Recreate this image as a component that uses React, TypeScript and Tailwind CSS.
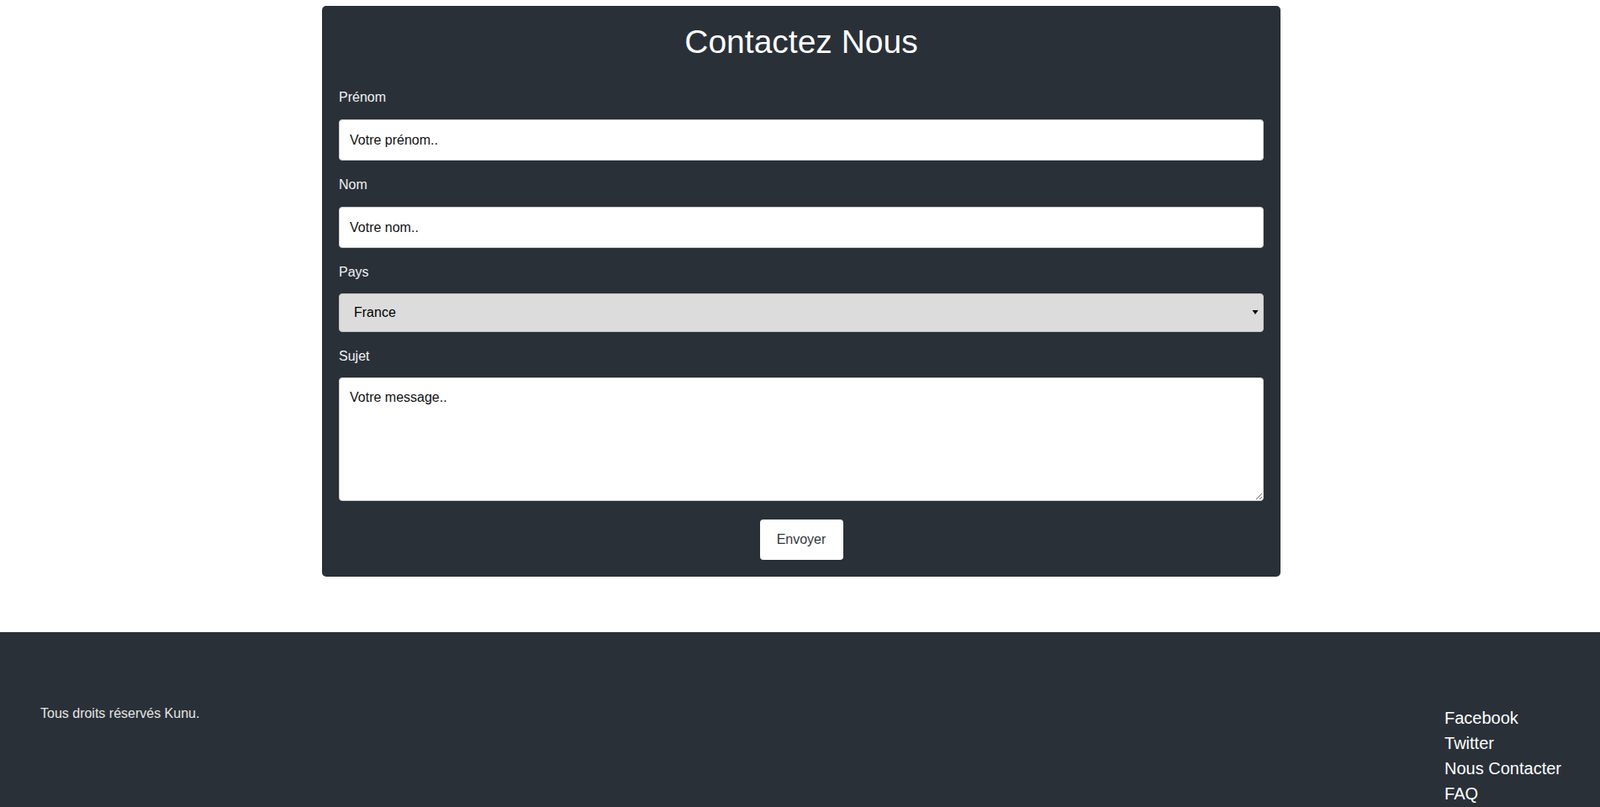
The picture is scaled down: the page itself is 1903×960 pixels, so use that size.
import React from 'react'

const fieldClass =
  'block w-full rounded-[4px] border border-[#cccccc] bg-white px-[12px] text-[16px] text-black placeholder:text-[#111] outline-none'

function Label({ htmlFor, children }: { htmlFor: string; children: React.ReactNode }) {
  return (
    <label htmlFor={htmlFor} className="block h-[18px] text-[16px] leading-[18px] text-[#f2f2f2]">
      {children}
    </label>
  )
}

export default function App() {
  const links = ['Facebook', 'Twitter', 'Nous Contacter', 'FAQ']

  return (
    <div className="min-h-screen bg-white font-['Liberation_Sans',Arial,sans-serif]">
      <div className="flex justify-center pt-[7px] pl-[3px]">
        <div className="w-[1140px] rounded-[5px] bg-[#2a3038] px-[20px] pt-[20px] pb-[20px]">
          <h1 className="mb-[35px] h-[45px] text-center text-[39px] leading-[45px] font-normal text-white">
            Contactez Nous
          </h1>

          <form onSubmit={(e) => e.preventDefault()}>
            <Label htmlFor="fname">Prénom</Label>
            <input id="fname" type="text" placeholder="Votre prénom.." className={`${fieldClass} mt-[17px] mb-[20px] h-[49px]`} />

            <Label htmlFor="lname">Nom</Label>
            <input id="lname" type="text" placeholder="Votre nom.." className={`${fieldClass} mt-[17px] mb-[20px] h-[49px]`} />

            <Label htmlFor="country">Pays</Label>
            <div className="relative mt-[16px] mb-[20px]">
              <select
                id="country"
                defaultValue="france"
                className="block h-[46px] w-full appearance-none rounded-[4px] border border-[#c4c4c4] bg-[#dcdcdc] pl-[17px] text-[16px] text-black outline-none"
              >
                <option value="france">France</option>
                <option value="belgique">Belgique</option>
                <option value="suisse">Suisse</option>
                <option value="canada">Canada</option>
              </select>
              <svg
                className="pointer-events-none absolute top-[19px] right-[6px] h-[7px] w-[8px]"
                viewBox="0 0 8 7"
              >
                <polygon points="0.5,1 7.5,1 4,6" fill="#000" />
              </svg>
            </div>

            <Label htmlFor="subject">Sujet</Label>
            <textarea
              id="subject"
              placeholder="Votre message.."
              className={`${fieldClass} mt-[16px] h-[147px] resize-y py-[14px] leading-[18px]`}
            />

            <div className="mt-[22px] flex justify-center">
              <button
                type="submit"
                className="h-[48px] w-[99px] rounded-[4px] bg-white text-[16px] text-[#33373c]"
              >
                Envoyer
              </button>
            </div>
          </form>
        </div>
      </div>

      <footer className="mt-[66px] flex items-start justify-between bg-[#2a3038] pt-[88px] pr-[46px] pb-[80px] pl-[48px]">
        <p className="text-[16px] leading-[18px] text-[#e4e4e4]">Tous droits réservés Kunu.</p>
        <ul className="-mt-[1px]">
          {links.map((l) => (
            <li key={l} className="whitespace-nowrap text-[20px] leading-[30px] text-white">
              <a href="#">{l}</a>
            </li>
          ))}
        </ul>
      </footer>
    </div>
  )
}
